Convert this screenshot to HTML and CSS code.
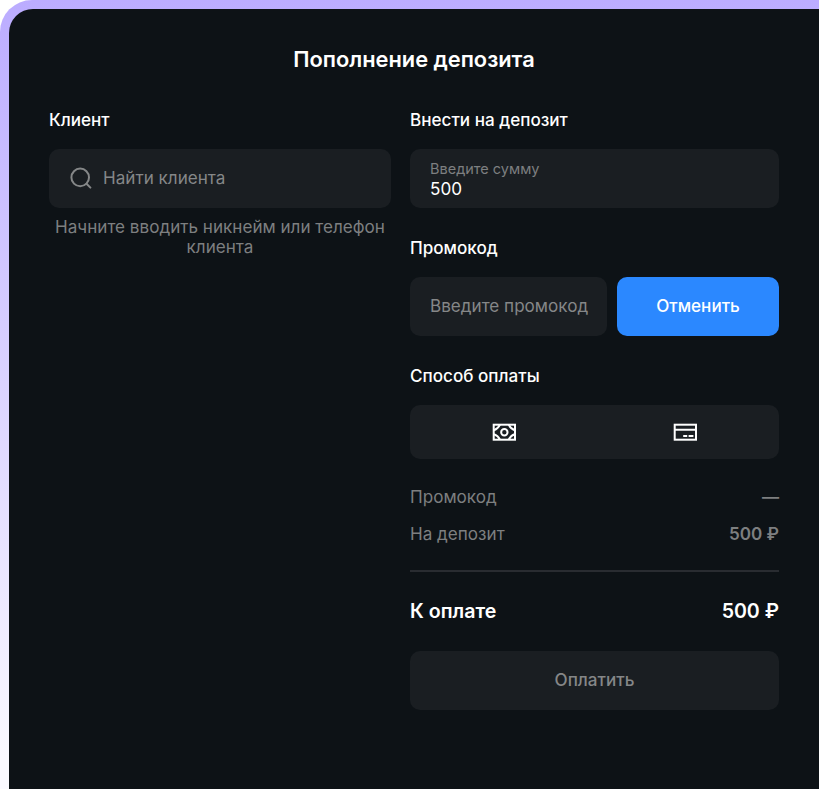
FILE: index.html
```html
<!DOCTYPE html>
<html lang="ru">
<head>
  <meta charset="UTF-8" />
  <title>Пополнение депозита</title>
  <link rel="stylesheet" href="styles.css">
</head>
<body>
  <div class="frame">
    <main class="modal">
      <h1 class="title">Пополнение депозита</h1>

      <div class="columns">
        <!-- Client -->
        <section class="client">
          <h2>Клиент</h2>
          <label class="field search">
            <svg width="22" height="22" viewBox="0 0 22 22" fill="none" stroke="#858788" stroke-width="2" stroke-linecap="round">
              <circle cx="10.2" cy="10.4" r="8.8" />
              <path d="M16.5 16.7L20.4 20.6" />
            </svg>
            <span>Найти клиента</span>
          </label>
          <p class="hint">Начните вводить никнейм или телефон клиента</p>
        </section>

        <!-- Deposit -->
        <section class="deposit">
          <h2>Внести на депозит</h2>
          <label class="field amount">
            <span class="caption">Введите сумму</span>
            <span class="value">500</span>
          </label>

          <h2>Промокод</h2>
          <div class="promo">
            <label class="field">Введите промокод</label>
            <button class="btn cancel">Отменить</button>
          </div>

          <h2>Способ оплаты</h2>
          <div class="methods">
            <div class="method">
              <svg width="24" height="18" viewBox="0 0 24 18" fill="none" stroke="#fff" stroke-width="2">
                <rect x="1.7" y="1.7" width="21.3" height="15" />
                <path d="M8 1.7Q6 6 2 7.2M16.7 1.7Q18.7 6 22.7 7.2M8 16.7Q6 12.4 2 11.2M16.7 16.7Q18.7 12.4 22.7 11.2" />
                <circle cx="12.35" cy="9.2" r="3.2" />
              </svg>
            </div>
            <div class="method">
              <svg width="24" height="18" viewBox="0 0 24 18" fill="none" stroke="#fff" stroke-width="2">
                <rect x="1.7" y="1.7" width="21.3" height="15" />
                <path d="M2 6.8H23M10.2 13H14.2M15.6 13H20.4" />
              </svg>
            </div>
          </div>

          <div class="row"><span>Промокод</span><b>—</b></div>
          <div class="row"><span>На депозит</span><b>500 ₽</b></div>
          <div class="row total"><span>К оплате</span><b>500 ₽</b></div>
          <button class="btn pay">Оплатить</button>
        </section>
      </div>
    </main>
  </div>
</body>
</html>
```

FILE: styles.css
```css
* {
  box-sizing: border-box;
}
body {
  margin: 0;
  background: #fff;
  font-family: Inter, sans-serif;
  font-size: 17.1px;
  line-height: 20px;
  color: #fff;
  overflow: hidden;
}
.frame {
  height: 789px;
  padding: 9px 0 0 9px;
  border-radius: 32px 0 0 0;
  background: linear-gradient(#bbacff, #faf9ff 96%);
}
.modal {
  height: 780px;
  padding: 36px 40px 0;
  border-radius: 24px 0 0 0;
  background: #0d1216;
}
.title {
  margin: 0 0 37px;
  font-size: 21.8px;
  line-height: 28px;
  font-weight: 600;
  text-align: center;
}
.columns {
  display: grid;
  grid-template-columns: 342px 369px;
  column-gap: 19px;
}
h2 {
  margin: 0 0 19px;
  font-size: 17.1px;
  line-height: 20px;
  font-weight: 500;
}
.field {
  display: flex;
  align-items: center;
  height: 59px;
  padding: 0 20px 1px;
  border-radius: 10px;
  background: #1a1e22;
  color: #858788;
  white-space: nowrap;
}
.search {
  gap: 11px;
  padding-left: 21px;
}
.hint {
  margin: 9px 0 0;
  color: #7d7f80;
  text-align: center;
}
.amount {
  flex-direction: column;
  align-items: flex-start;
  justify-content: center;
  padding-bottom: 0;
}
.caption {
  font-size: 14.5px;
  line-height: 19px;
  color: #7d7f80;
}
.value {
  line-height: 21px;
  color: #fff;
}
.amount,
.promo {
  margin-bottom: 30px;
}
.promo {
  display: grid;
  grid-template-columns: 197px 162px;
  gap: 10px;
}
.btn {
  width: 100%;
  height: 59px;
  padding: 0 0 1px;
  border: 0;
  border-radius: 10px;
  font: inherit;
  font-weight: 500;
}
.cancel {
  background: #2b88ff;
  color: #fff;
}
.methods {
  display: flex;
  height: 54px;
  padding: 0 4px;
  margin-bottom: 28px;
  border-radius: 10px;
  background: #1a1e22;
}
.method {
  flex: 1;
  display: flex;
  align-items: center;
  justify-content: center;
}
.row {
  display: flex;
  justify-content: space-between;
  margin-bottom: 17px;
  color: #7d7f80;
}
.row b {
  font-weight: 600;
}
.total {
  margin: 26px 0 28px;
  padding-top: 27px;
  border-top: 2px solid #292c31;
  font-size: 19.6px;
  line-height: 24px;
  font-weight: 600;
  color: #fff;
}
.pay {
  background: #1a1e22;
  color: #858788;
}
```
